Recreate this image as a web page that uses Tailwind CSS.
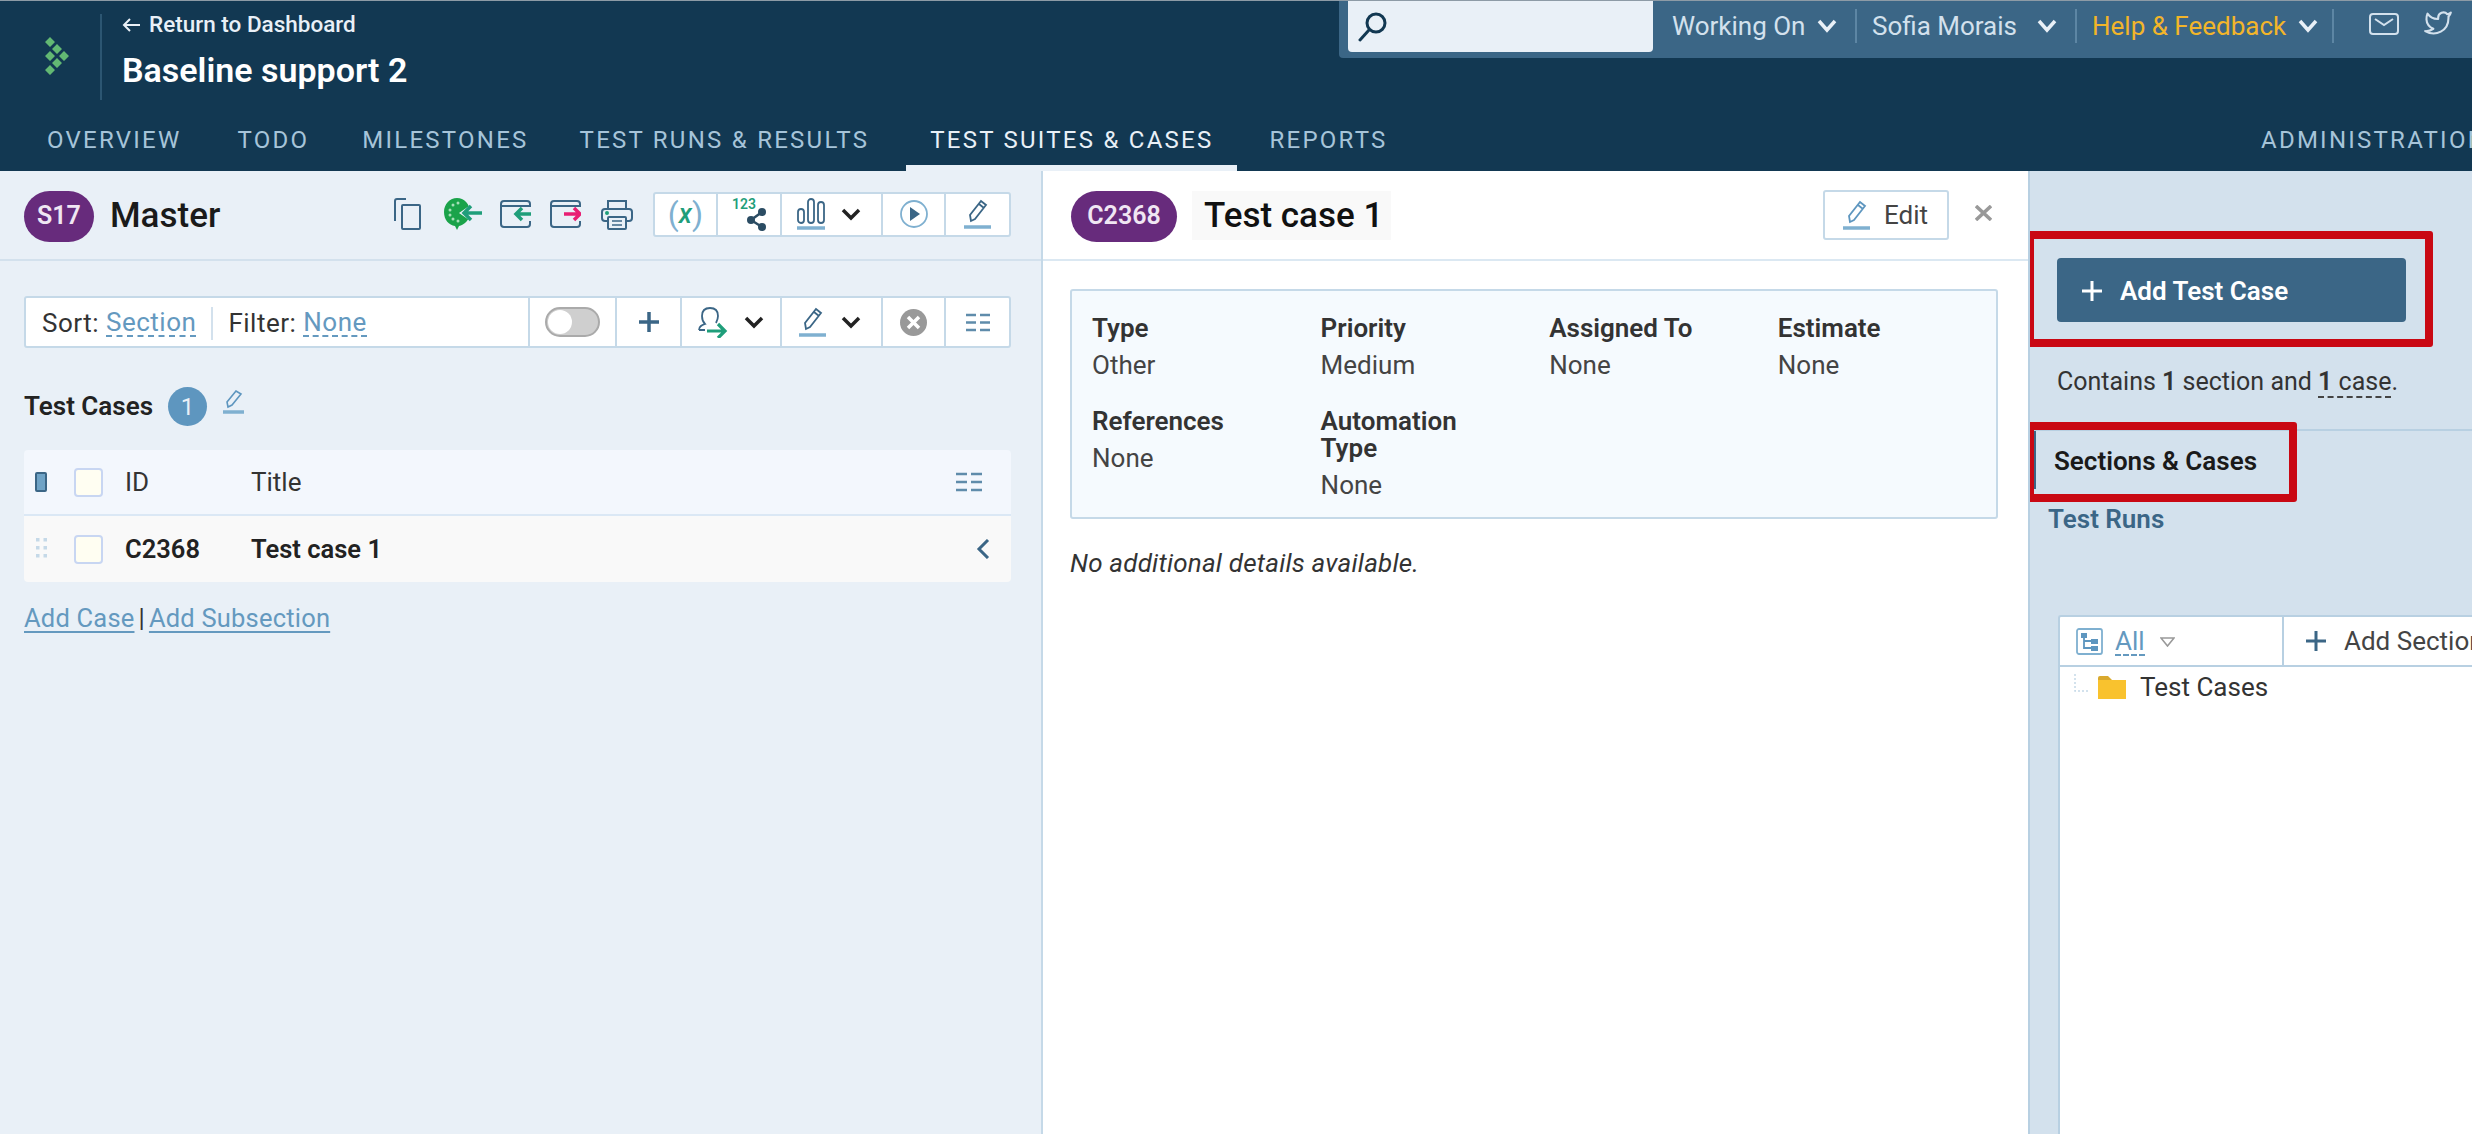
<!DOCTYPE html>
<html lang="en">
<head>
<meta charset="UTF-8">
<title>Test case 1</title>
<script src="https://cdn.jsdelivr.net/npm/@tailwindcss/browser@4"></script>
</head>
<body class="font-[Roboto,sans-serif] text-[26px] text-[#333]">
<div class="w-[2472px] h-[1134px] overflow-hidden flex flex-col bg-white">

  <!-- header -->
  <div class="h-px bg-[#8d9ba6]"></div>
  <div class="h-[170px] bg-[#123852] flex flex-col shrink-0">
    <div class="h-[113px] flex items-start">
      <div class="w-[102px] h-[86px] mt-[13px] border-r-2 border-[#2c5672] flex items-center justify-start pl-[44px]">
        <svg class="w-[26px] h-[40px] mb-[2px]" viewBox="0 0 26 40" fill="#62b873">
          <path d="M6 1l5 5-5 5-5-5zM13 8l5 5-5 5-5-5zM6 15l5 5-5 5-5-5zM20 15l5 5-5 5-5-5zM13 22l5 5-5 5-5-5zM6 29l5 5-5 5-5-5z"/>
        </svg>
      </div>
      <div class="pl-[20px] pt-[12px] text-white">
        <div class="flex items-center h-[24px] text-[22.5px] font-medium text-[#e9f0f7]">
          <svg class="w-[19px] h-[16px] mr-[8px]" viewBox="0 0 19 16" fill="none" stroke="#e9f0f7" stroke-width="2"><path d="M18 8H2M8 2L2 8l6 6"/></svg>
          Return to Dashboard
        </div>
        <div class="mt-[13px] h-[40px] leading-[40px] text-[34px] font-semibold">Baseline support 2</div>
      </div>
      <div class="ml-auto w-[1133px] h-[57px] bg-[#3b6686] rounded-bl-[4px] pl-[9px] flex items-start text-[#d3e1ed]">
        <div class="w-[305px] h-[51px] bg-[#e9f0f7] rounded-b-[4px] pl-[10px] pt-[11px]">
          <svg class="w-[30px] h-[30px]" viewBox="0 0 30 30" fill="none" stroke="#123852" stroke-width="3"><circle cx="18" cy="11" r="9"/><path d="M11 18L2 28" stroke-linecap="round"/></svg>
        </div>
        <div class="w-[204px] h-[34px] mt-[8px] border-r-2 border-[#5d86a4] pl-[19px] flex items-center">
          <span>Working On</span>
          <svg class="w-[20px] h-[14px] ml-[12px]" viewBox="0 0 20 14" fill="none" stroke="#e9f0f7" stroke-width="3.5"><path d="M2 2l8 9 8-9"/></svg>
        </div>
        <div class="w-[220px] h-[34px] mt-[8px] border-r-2 border-[#5d86a4] pl-[15px] flex items-center">
          <span>Sofia Morais</span>
          <svg class="w-[20px] h-[14px] ml-[20px]" viewBox="0 0 20 14" fill="none" stroke="#e9f0f7" stroke-width="3.5"><path d="M2 2l8 9 8-9"/></svg>
        </div>
        <div class="w-[257px] h-[34px] mt-[8px] border-r-2 border-[#5d86a4] pl-[15px] flex items-center">
          <span class="text-[#f2b52a]">Help &amp; Feedback</span>
          <svg class="w-[20px] h-[14px] ml-[12px]" viewBox="0 0 20 14" fill="none" stroke="#e9f0f7" stroke-width="3.5"><path d="M2 2l8 9 8-9"/></svg>
        </div>
        <svg class="w-[30px] h-[22px] ml-[35px] mt-[12px]" viewBox="0 0 30 22" fill="none" stroke="#d3e1ed" stroke-width="2"><rect x="1" y="1" width="28" height="20" rx="3"/><path d="M6 6l9 6 9-6"/></svg>
        <svg class="w-[30px] h-[28px] ml-[24px] mt-[8px]" viewBox="0 0 24 24" fill="none" stroke="#d3e1ed" stroke-width="1.8" stroke-linejoin="round"><path d="M23 3a10.9 10.9 0 0 1-3 1.53 4.48 4.48 0 0 0-7.86 3v1A10.66 10.66 0 0 1 3 4s-4 9 5 13a11.64 11.64 0 0 1-7 2c9 5 20 0 20-11.5a4.5 4.5 0 0 0-.08-.83A7.72 7.72 0 0 0 23 3z"/></svg>
      </div>
    </div>
    <div class="h-[57px] flex pl-[23px] text-[24px] tracking-[2.25px] text-[#a6c4d9] whitespace-nowrap">
      <div class="px-[24px] mr-[8px] pt-[8px] h-full border-b-[6px] border-transparent">OVERVIEW</div>
      <div class="px-[24px] mr-[5px] pt-[8px] h-full border-b-[6px] border-transparent">TODO</div>
      <div class="px-[24px] mr-[3px] pt-[8px] h-full border-b-[6px] border-transparent">MILESTONES</div>
      <div class="px-[24px] mr-[13px] pt-[8px] h-full border-b-[6px] border-transparent">TEST RUNS &amp; RESULTS</div>
      <div class="px-[24px] mr-[8px] pt-[8px] h-full border-b-[6px] border-[#e9f0f7] text-[#e9f0f7]">TEST SUITES &amp; CASES</div>
      <div class="px-[24px] pt-[8px] h-full border-b-[6px] border-transparent">REPORTS</div>
      <div class="ml-auto w-[211px] shrink-0 overflow-hidden pt-[8px]">ADMINISTRATION</div>
    </div>
  </div>

  <!-- body -->
  <div class="flex-1 flex min-h-0">

    <!-- left panel -->
    <div class="w-[1043px] shrink-0 bg-[#e9f0f7] border-r-2 border-[#c5d9e8]">
      <div class="h-[90px] border-b-2 border-[#d3e1ed] flex items-center pl-[24px] pr-[30px] pb-[2px]">
        <div class="w-[70px] h-[51px] mt-[4px] rounded-full bg-[#672b7c] text-[#f0e6f3] text-[25px] font-semibold flex items-center justify-center">S17</div>
        <div class="ml-[16px] mt-[4px] text-[35px] font-medium text-[#1a1a1a]">Master</div>
        <div class="ml-auto flex items-center">
          <svg class="w-[27px] h-[32px]" viewBox="0 0 27 32" fill="none" stroke="#3b6686" stroke-width="2"><path d="M12 1H3a2 2 0 0 0-2 2v20"/><rect x="8" y="7" width="18" height="24" rx="1"/></svg>
          <svg class="w-[38px] h-[32px] ml-[23px]" viewBox="0 0 38 32"><path d="M13 0c7 0 13 6 13 14s-6 13-11 14l-2 4-2-4C5 27 0 22 0 14S6 0 13 0z" fill="#1aa34a"/><path d="M15 15l13-9v18z" fill="#e9f0f7"/><g fill="#a6e0b8"><circle cx="14" cy="5" r="1.5"/><circle cx="9" cy="7" r="1.5"/><circle cx="6" cy="12" r="1.5"/><circle cx="6" cy="17" r="1.5"/><circle cx="9" cy="21" r="1.5"/><circle cx="14" cy="23" r="1.5"/></g><path d="M38 15H20M27 8l-7 7 7 7" fill="none" stroke="#1f9e7a" stroke-width="3.5"/></svg>
          <svg class="w-[31px] h-[28px] ml-[18px]" viewBox="0 0 31 28" fill="none" stroke="#3b6686" stroke-width="2"><path d="M30 7V4a3 3 0 0 0-3-3H4a3 3 0 0 0-3 3v20a3 3 0 0 0 3 3h23a3 3 0 0 0 3-3v-3M1 6h29"/><path d="M31 14H17M22 8l-6 6 6 6" stroke="#1f9e7a" stroke-width="3.5"/></svg>
          <svg class="w-[31px] h-[28px] ml-[19px]" viewBox="0 0 31 28" fill="none" stroke="#3b6686" stroke-width="2"><path d="M30 7V4a3 3 0 0 0-3-3H4a3 3 0 0 0-3 3v20a3 3 0 0 0 3 3h23a3 3 0 0 0 3-3v-3M1 6h29"/><path d="M14 14h15M24 8l6 6-6 6" stroke="#e81e73" stroke-width="3.5"/></svg>
          <svg class="w-[32px] h-[31px] ml-[20px]" viewBox="0 0 32 31" fill="none" stroke="#3b6686" stroke-width="2"><path d="M7 10V2h18v8M7 22H4a3 3 0 0 1-3-3v-6a3 3 0 0 1 3-3h24a3 3 0 0 1 3 3v6a3 3 0 0 1-3 3h-3"/><rect x="7" y="18" width="18" height="12" rx="1"/><path d="M11 22h10M11 26h10" stroke-width="1.5"/><circle cx="6" cy="14" r="1" fill="#1f9e7a" stroke="#1f9e7a"/></svg>
          <div class="ml-[20px] h-[45px] flex bg-white border-2 border-[#c5d9e8] rounded-[3px]">
            <div class="w-[63px] border-r-2 border-[#c5d9e8] flex items-center justify-center text-[32px] leading-none"><span class="text-[#7fb0d0]">(</span><span class="italic font-medium text-[#1f9e7a] text-[27px]">x</span><span class="text-[#7fb0d0]">)</span></div>
            <div class="w-[64px] border-r-2 border-[#c5d9e8] relative">
              <span class="absolute left-[14px] top-[3px] text-[14px] leading-[15px] font-semibold text-[#1f9e7a]">123</span>
              <svg class="absolute left-[29px] top-[14px] w-[21px] h-[23px]" viewBox="0 0 21 23" fill="#2b4c63"><circle cx="15" cy="4" r="4"/><circle cx="4" cy="12" r="4"/><circle cx="15" cy="19" r="4"/><path d="M4 12L15 4M4 12l11 7" stroke="#2b4c63" stroke-width="2.5"/></svg>
            </div>
            <div class="w-[101px] border-r-2 border-[#c5d9e8] flex items-center pl-[15px]">
              <svg class="w-[28px] h-[33px]" viewBox="0 0 28 33" fill="none" stroke="#3b6686" stroke-width="1.8"><rect x="1" y="11" width="6" height="14" rx="3"/><rect x="11" y="1" width="6" height="24" rx="3"/><rect x="21" y="4" width="6" height="21" rx="3"/><path d="M0 30h28" stroke="#7fb0d0" stroke-width="3.5"/></svg>
              <svg class="w-[20px] h-[13px] ml-[16px]" viewBox="0 0 20 13" fill="none" stroke="#222" stroke-width="3.5"><path d="M2 2l8 8 8-8"/></svg>
            </div>
            <div class="w-[63px] border-r-2 border-[#c5d9e8] flex items-center justify-center">
              <svg class="w-[28px] h-[28px]" viewBox="0 0 28 28"><circle cx="14" cy="14" r="13" fill="none" stroke="#7fb0d0" stroke-width="1.8"/><path d="M10 7l10 7-10 7z" fill="#3b6686"/></svg>
            </div>
            <div class="w-[63px] flex items-center justify-center">
              <svg class="w-[27px] h-[30px]" viewBox="0 0 27 30" fill="none" stroke="#3b6686" stroke-width="1.8"><path d="M7 22l-1-6L17 2l5 4-11 14zM15 5l5 4"/><path d="M0 28h27" stroke="#7fb0d0" stroke-width="3.5"/></svg>
            </div>
          </div>
        </div>
      </div>

      <div class="pl-[24px] pr-[30px]">
        <!-- sort and filter bar -->
        <div class="mt-[35px] h-[52px] flex bg-white border-2 border-[#c5d9e8] rounded-[3px] text-[#333]">
          <div class="w-[504px] border-r-2 border-[#c5d9e8] flex items-center pl-[16px] pt-[2px] tracking-[0.5px]">
            <span>Sort:</span>
            <span class="ml-[7px] text-[#6499bf] border-b-2 border-dashed border-[#6499bf] leading-[26px]">Section</span>
            <span class="ml-[15px] w-[2px] h-[33px] bg-[#d3e1ed]"></span>
            <span class="ml-[15px]">Filter:</span>
            <span class="ml-[7px] text-[#6499bf] border-b-2 border-dashed border-[#6499bf] leading-[26px]">None</span>
          </div>
          <div class="w-[87px] border-r-2 border-[#c5d9e8] flex items-center justify-center">
            <div class="w-[55px] h-[30px] rounded-full bg-[#cfcfcf] border-2 border-[#aaa] pl-[1px] flex items-center"><div class="w-[24px] h-[24px] rounded-full bg-white"></div></div>
          </div>
          <div class="w-[65px] border-r-2 border-[#c5d9e8] flex items-center justify-center">
            <svg class="w-[20px] h-[20px]" viewBox="0 0 20 20" stroke="#3b6686" stroke-width="3.5"><path d="M10 0v20M0 10h20"/></svg>
          </div>
          <div class="w-[100px] border-r-2 border-[#c5d9e8] flex items-center pl-[16px]">
            <svg class="w-[30px] h-[31px]" viewBox="0 0 30 31" fill="none" stroke="#3b6686" stroke-width="1.8"><path d="M1 23h6M1 23c0-4 3-5 6-6-2-2-3-5-3-8 0-5 3-8 8-8s8 3 8 8c0 3-1 5-2 7"/><path d="M9 24h17M20 17l7 7-7 7" stroke="#1f9e7a" stroke-width="3.2"/></svg>
            <svg class="w-[20px] h-[13px] ml-[16px]" viewBox="0 0 20 13" fill="none" stroke="#222" stroke-width="3.5"><path d="M2 2l8 8 8-8"/></svg>
          </div>
          <div class="w-[101px] border-r-2 border-[#c5d9e8] flex items-center pl-[17px]">
            <svg class="w-[27px] h-[30px]" viewBox="0 0 27 30" fill="none" stroke="#3b6686" stroke-width="1.8"><path d="M7 22l-1-6L17 2l5 4-11 14zM15 5l5 4"/><path d="M0 28h27" stroke="#7fb0d0" stroke-width="3.5"/></svg>
            <svg class="w-[20px] h-[13px] ml-[15px]" viewBox="0 0 20 13" fill="none" stroke="#222" stroke-width="3.5"><path d="M2 2l8 8 8-8"/></svg>
          </div>
          <div class="w-[63px] border-r-2 border-[#c5d9e8] flex items-center justify-center">
            <svg class="w-[27px] h-[27px]" viewBox="0 0 27 27"><circle cx="13.5" cy="13.5" r="13.5" fill="#999"/><path d="M8 8l11 11M19 8L8 19" stroke="#fff" stroke-width="3.5"/></svg>
          </div>
          <div class="flex-1 flex items-center justify-center">
            <svg class="w-[24px] h-[19px]" viewBox="0 0 24 19" fill="none" stroke="#5f8cab" stroke-width="2.4"><path d="M0 2h10M14 2h10M0 9.500h10M14 9.500h10M0 17h10M14 17h10"/></svg>
          </div>
        </div>

        <!-- section title -->
        <div class="mt-[39px] h-[39px] flex items-center">
          <span class="font-semibold text-[#222]">Test Cases</span>
          <span class="ml-[15px] w-[39px] h-[39px] rounded-full bg-[#5e96bf] text-[#e9f0f7] text-[24px] flex items-center justify-center">1</span>
          <svg class="ml-[16px] mb-[10px] w-[22px] h-[24px]" viewBox="0 0 22 24" fill="none" stroke="#5e96bf" stroke-width="1.6"><path d="M5 17l-1-5L13 1l5 3-9 11z"/><path d="M0 22h21" stroke="#7fb0d0" stroke-width="3.5"/></svg>
        </div>

        <!-- table -->
        <div class="mt-[24px] rounded-[4px] overflow-hidden">
          <div class="h-[66px] bg-[#f3f7fd] border-b-2 border-[#dbe8f5] flex items-center relative">
            <div class="ml-[11px] w-[12px] h-[20px] rounded-[2px] bg-[#6fa3c6] border-2 border-[#3b6686]"></div>
            <div class="ml-[27px] w-[29px] h-[29px] rounded-[4px] bg-[#fffef2] border-2 border-[#c8d6f2]"></div>
            <div class="ml-[22px] w-[126px]">ID</div>
            <div>Title</div>
            <svg class="ml-auto mr-[29px] w-[26px] h-[20px]" viewBox="0 0 26 20" fill="none" stroke="#5f8cab" stroke-width="2.4"><path d="M0 2h11M15 2h11M0 10h11M15 10h11M0 18h11M15 18h11"/></svg>
          </div>
          <div class="h-[66px] bg-[#f9f9f9] flex items-center font-semibold text-[#222]">
            <svg class="ml-[12px] w-[11px] h-[20px] mb-[2px]" viewBox="0 0 11 20" fill="#c5d9e8"><rect width="3.5" height="3.5"/><rect x="7.5" width="3.5" height="3.5"/><rect y="8" width="3.5" height="3.5"/><rect x="7.5" y="8" width="3.5" height="3.5"/><rect y="16" width="3.5" height="3.5"/><rect x="7.5" y="16" width="3.5" height="3.5"/></svg>
            <div class="ml-[27px] w-[29px] h-[29px] rounded-[4px] bg-[#fffef2] border-2 border-[#c8d6f2]"></div>
            <div class="ml-[22px] w-[126px] text-[25.5px]">C2368</div>
            <div class="text-[25.5px]">Test case 1</div>
            <svg class="ml-auto mr-[21px] w-[14px] h-[20px]" viewBox="0 0 14 20" fill="none" stroke="#3b6686" stroke-width="3"><path d="M12 1L3 10l9 9"/></svg>
          </div>
        </div>

        <div class="mt-[22px] leading-[28px] text-[25.5px] tracking-[0.2px] text-[#6499bf]">
          <span class="underline underline-offset-4">Add Case</span><span class="text-[#333] mx-[4px]">|</span><span class="underline underline-offset-4">Add Subsection</span>
        </div>
      </div>
    </div>

    <!-- center panel -->
    <div class="w-[985px] shrink-0 bg-white">
      <div class="h-[90px] border-b-2 border-[#dbe8f2] flex items-center pl-[28px] pr-[36px] pb-[2px]">
        <div class="w-[106px] h-[51px] mt-[4px] rounded-full bg-[#672b7c] text-[#f0e6f3] text-[25px] font-semibold flex items-center justify-center">C2368</div>
        <div class="ml-[15px] mt-[2px] h-[49px] pl-[12px] pr-[8px] bg-[#f9f9f9] text-[35px] leading-[49px] font-medium text-[#111]">Test case 1</div>
        <div class="ml-auto mt-[2px] w-[126px] h-[50px] border-2 border-[#c5d9e8] rounded-[3px] flex items-center pl-[18px]">
          <svg class="w-[27px] h-[30px]" viewBox="0 0 27 30" fill="none" stroke="#5e96bf" stroke-width="1.8"><path d="M7 22l-1-6L17 2l5 4-11 14zM15 5l5 4"/><path d="M0 28h27" stroke="#7fb0d0" stroke-width="3.5"/></svg>
          <span class="ml-[14px] text-[#444]">Edit</span>
        </div>
        <svg class="ml-[26px] mb-[3px] w-[17px] h-[16px]" viewBox="0 0 17 16" stroke="#999" stroke-width="3.5"><path d="M1 1l15 14M16 1L1 15"/></svg>
      </div>
      <div class="pl-[27px] pr-[30px] pt-[28px]">
        <div class="bg-[#f5fafe] border-2 border-[#c5d9e8] rounded-[3px] pl-[20px] pt-[24px] pb-[18px] grid grid-cols-[repeat(4,228.6px)] gap-y-[29px] leading-[27px] text-[#444]">
          <div><div class="font-semibold text-[#333]">Type</div><div class="mt-[10px]">Other</div></div>
          <div><div class="font-semibold text-[#333]">Priority</div><div class="mt-[10px]">Medium</div></div>
          <div><div class="font-semibold text-[#333]">Assigned To</div><div class="mt-[10px]">None</div></div>
          <div><div class="font-semibold text-[#333]">Estimate</div><div class="mt-[10px]">None</div></div>
          <div><div class="font-semibold text-[#333]">References</div><div class="mt-[10px]">None</div></div>
          <div><div class="font-semibold text-[#333] w-[160px]">Automation Type</div><div class="mt-[10px]">None</div></div>
        </div>
        <div class="mt-[30px] leading-[28px] italic tracking-[0.2px] text-[#333]">No additional details available.</div>
      </div>
    </div>

    <!-- right panel -->
    <div class="flex-1 min-w-0 bg-[#d3e1ed] border-l-2 border-[#b8d0e2] flex flex-col overflow-hidden relative">
      <div class="h-[260px] shrink-0 border-b-2 border-[#b8d0e2] pl-[27px] pt-[87px]">
        <div class="w-[349px] h-[64px] bg-[#3b6686] rounded-[4px] flex items-center pl-[25px] pt-[2px] text-white font-semibold">
          <svg class="w-[20px] h-[20px]" viewBox="0 0 20 20" stroke="#fff" stroke-width="3"><path d="M10 0v20M0 10h20"/></svg>
          <span class="ml-[18px]">Add Test Case</span>
        </div>
        <div class="mt-[46px] leading-[28px] text-[25px] whitespace-nowrap">Contains <b class="font-semibold">1</b> section and <span class="border-b-2 border-dashed border-[#444]"><b class="font-semibold">1</b> case</span>.</div>
      </div>
      <div class="ml-[4px] h-[58px] border-l-2 border-[#3b6686] pl-[18px] pt-[2px] flex items-center font-semibold text-[#1a1a1a]">Sections &amp; Cases</div>
      <div class="mt-[16px] ml-[18px] leading-[28px] font-semibold text-[#3b6686]">Test Runs</div>
      <div class="mt-[82px] ml-[28px] w-[600px] flex-1 bg-white border-l-2 border-t-2 border-[#b8d0e2] rounded-tl-[3px]">
        <div class="h-[50px] border-b-2 border-[#b8d0e2] flex">
          <div class="w-[224px] border-r-2 border-[#b8d0e2] flex items-center pl-[16px]">
            <svg class="w-[27px] h-[27px]" viewBox="0 0 27 27" fill="none" stroke="#7fb0d0" stroke-width="1.8"><rect x="1" y="1" width="25" height="25" rx="2"/><g fill="#5e96bf" stroke="none"><rect x="5" y="5" width="6" height="5"/><rect x="15" y="11" width="7" height="5"/><rect x="15" y="18" width="7" height="5"/></g><path d="M8 10v10h7M8 13h7" stroke="#5e96bf"/></svg>
            <span class="ml-[12px] mt-[2px] text-[#6499bf] border-b-2 border-dashed border-[#6499bf] leading-[26px]">All</span>
            <svg class="ml-[15px] mt-[2px] w-[15px] h-[10px]" viewBox="0 0 15 10" fill="none" stroke="#999" stroke-width="1.6"><path d="M1 1h13L7.5 9z"/></svg>
          </div>
          <div class="flex items-center pl-[22px]">
            <svg class="w-[20px] h-[20px]" viewBox="0 0 20 20" stroke="#3b6686" stroke-width="3"><path d="M10 0v20M0 10h20"/></svg>
            <span class="ml-[18px] text-[#444] whitespace-nowrap">Add Section</span>
          </div>
        </div>
        <div class="flex items-center h-[40px] pl-[14px]">
          <svg class="w-[14px] h-[18px] mb-[8px]" viewBox="0 0 14 18" fill="none" stroke="#c5d9e8" stroke-width="1.5" stroke-dasharray="2 2"><path d="M1 0v17h13"/></svg>
          <svg class="ml-[10px] w-[28px] h-[24px]" viewBox="0 0 28 24"><path d="M0 3a2 2 0 0 1 2-2h8l4 4H0z" fill="#d9a92e"/><rect y="5" width="28" height="19" fill="#f9c22e"/></svg>
          <span class="ml-[14px] text-[#333]">Test Cases</span>
        </div>
      </div>
      <!-- annotation boxes -->
      <div class="absolute left-[-4px] top-[60px] w-[407px] h-[116px] border-[8px] border-[#c90813] rounded-[3px]"></div>
      <div class="absolute left-[-4px] top-[251px] w-[271px] h-[80px] border-[8px] border-[#c90813] rounded-[3px]"></div>
    </div>
  </div>
</div>
</body>
</html>
